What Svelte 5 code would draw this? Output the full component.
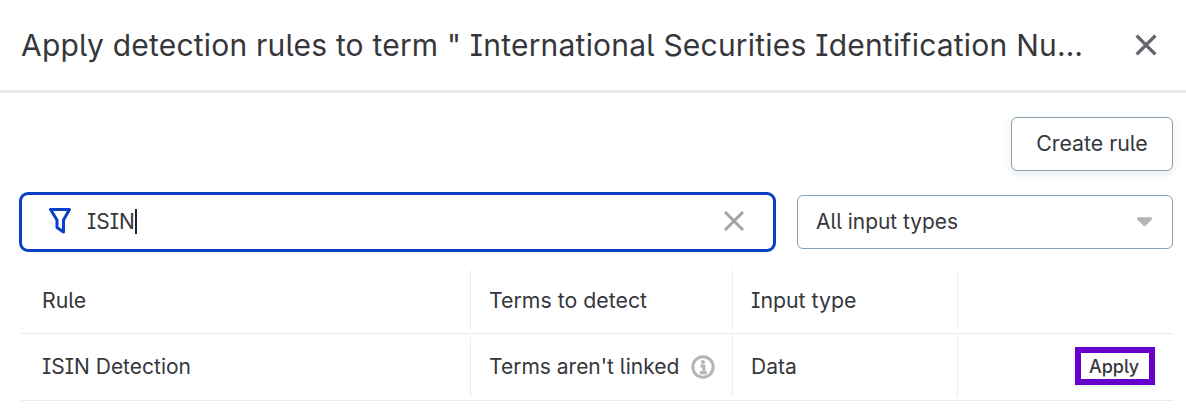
<script lang="ts">
	const columns = ['Rule', 'Terms to detect', 'Input type', ''];
	const title = 'Apply detection rules to term " International Securities Identification Number "';
</script>

<div class="dialog">
	<header class="dialog-header">
		<h2>{title}</h2>
		<button class="close" aria-label="Close">
			<svg viewBox="0 0 24 24" width="30" height="30"><path d="M4.500 4.500l15 15M19.500 4.500l-15 15" /></svg>
		</button>
	</header>

	<div class="body">
		<div class="actions">
			<button class="create-btn">Create rule</button>
		</div>

		<div class="filters">
			<div class="search">
				<svg class="funnel" viewBox="0 0 22 26" width="22" height="26">
					<path d="M1.500 1.500H20.500L14.500 12v12L8 19.500V12z" />
				</svg>
				<span class="query">ISIN<span class="caret"></span></span>
				<svg class="clear" viewBox="0 0 24 24" width="24" height="24"><path d="M3 3l18 18M21 3L3 21" /></svg>
			</div>
			<div class="select">
				<span>All input types</span>
				<svg viewBox="0 0 16 10" width="15" height="10"><path d="M0 1.500Q0 0 2 0h12q2 0 2 1.500q0 .8-1 1.500L9 9q-1 1-2 0L1 3Q0 2.300 0 1.500z" /></svg>
			</div>
		</div>

		<div class="table">
			<div class="row head">
				{#each columns as col}
					<div class="cell">{col}</div>
				{/each}
			</div>
			<div class="row body-row">
				<div class="cell">ISIN Detection</div>
				<div class="cell">
					Terms aren't linked
					<svg class="info" viewBox="0 0 24 24" width="24" height="24">
						<circle cx="12" cy="12" r="10.200" />
						<path d="M9.500 11h3.400v6.500M8.800 17.800h7" />
						<circle class="dot" cx="12" cy="7" r="2" />
					</svg>
				</div>
				<div class="cell">Data</div>
				<div class="cell end"><button class="apply">Apply</button></div>
			</div>
		</div>
	</div>
</div>

<style>
	:global(body) {
		margin: 0;
		background: #fff;
	}

	.dialog {
		width: 1186px;
		height: 420px;
		overflow: hidden;
		font-family: Inter, "Liberation Sans", sans-serif;
		font-feature-settings: "cv08", "ss02";
		color: #36373c;
		box-sizing: border-box;
	}

	.dialog-header {
		display: flex;
		align-items: center;
		justify-content: space-between;
		height: 93px;
		box-sizing: border-box;
		padding: 0 25px 0 21px;
		border-bottom: 3px solid #e9ecef;
	}

	h2 {
		margin: 0;
		width: 1062px;
		font-size: 30px;
		font-weight: 400;
		letter-spacing: 0.21px;
		white-space: nowrap;
		overflow: hidden;
		text-overflow: ellipsis;
	}

	.close {
		display: flex;
		padding: 0;
		border: none;
		background: none;
	}

	.close path {
		fill: none;
		stroke: #63666c;
		stroke-width: 2.800;
	}

	.body {
		padding: 24px 13px 0 19px;
	}

	.actions {
		display: flex;
		justify-content: flex-end;
	}

	.create-btn {
		width: 162px;
		height: 54px;
		padding: 0 0 2px;
		font: inherit;
		font-size: 21.300px;
		color: inherit;
		background: #fff;
		border: 1px solid #87a1b3;
		border-radius: 6px;
		box-shadow: 0 3px 8px rgba(60, 90, 110, 0.12);
	}

	.filters {
		display: flex;
		align-items: center;
		gap: 21px;
		margin-top: 21px;
	}

	.search {
		display: flex;
		align-items: center;
		width: 757px;
		height: 60px;
		box-sizing: border-box;
		padding: 0 27px 2px;
		border: 3px solid #0b40c4;
		border-radius: 9px;
	}

	.funnel path {
		fill: none;
		stroke: #0b40c4;
		stroke-width: 3;
		stroke-linejoin: round;
	}

	.query {
		flex: 1;
		margin-left: 16px;
		font-size: 21px;
	}

	.caret {
		display: inline-block;
		width: 2px;
		height: 25px;
		vertical-align: -5px;
		background: #222;
	}

	.clear path {
		fill: none;
		stroke: #a1a3a8;
		stroke-width: 3;
	}

	.select {
		display: flex;
		flex: 1;
		align-items: center;
		justify-content: space-between;
		height: 54px;
		box-sizing: border-box;
		padding: 0 20px 2px 18px;
		font-size: 20.900px;
		border: 1px solid #87a1b3;
		border-radius: 6px;
	}

	.select svg {
		fill: #b4b3b8;
		margin-top: 2px;
	}

	.table {
		margin: 18px 0 0 2px;
		font-size: 21px;
	}

	.row {
		display: grid;
		grid-template-columns: 450px 262px 225px 1fr;
		height: 67px;
		box-sizing: border-box;
		padding: 3px 0;
		border-bottom: 1px solid #e9ecef;
	}

	.head {
		height: 64px;
		padding-top: 0;
		font-size: 21.300px;
	}

	.cell {
		display: flex;
		align-items: center;
		gap: 12px;
		padding: 0 21px;
		border-right: 1px solid #e9ecef;
		white-space: nowrap;
	}

	.body-row .cell {
		padding-bottom: 2px;
	}

	.cell:nth-child(2),
	.cell:nth-child(3) {
		padding-right: 0;
		padding-left: 18px;
	}

	.cell:last-child {
		border-right: none;
	}

	.end {
		justify-content: flex-end;
	}

	.body-row .end {
		padding: 0 18px 2px 0;
	}

	.info {
		flex-shrink: 0;
		margin-top: 2px;
	}

	.info circle {
		fill: none;
		stroke: #b4b5b9;
		stroke-width: 3;
	}

	.info path {
		fill: none;
		stroke: #b4b5b9;
		stroke-width: 3;
	}

	.info .dot {
		fill: #b4b5b9;
		stroke: none;
	}

	.apply {
		width: 80px;
		height: 38px;
		padding: 0 2px 0 0;
		font: inherit;
		font-size: 18px;
		font-weight: 500;
		color: inherit;
		background: #fff;
		border: 6px solid #6600cc;
		box-shadow: 0 2px 5px rgba(60, 90, 110, 0.1);
	}
</style>
